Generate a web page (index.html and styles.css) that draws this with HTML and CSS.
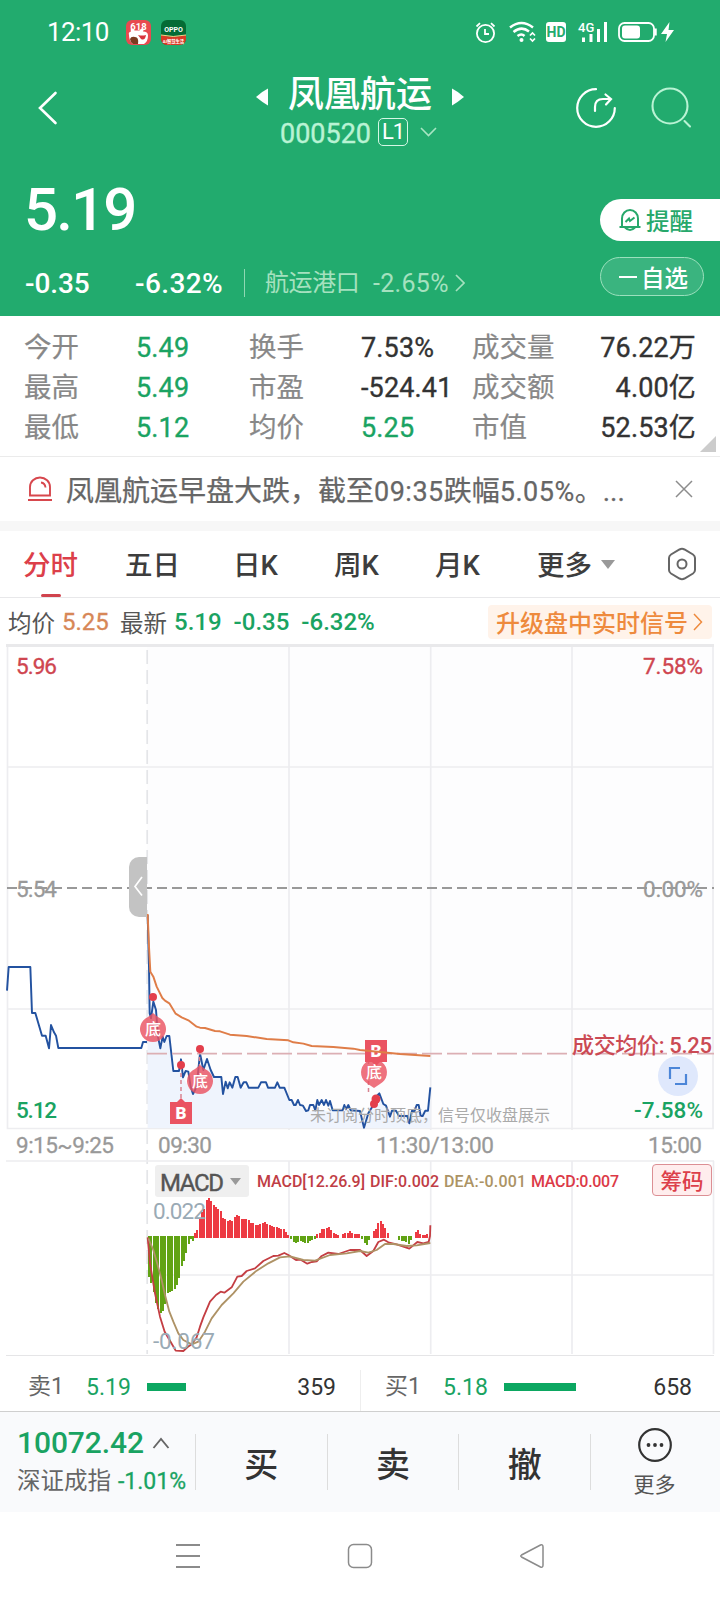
FILE: index.html
```html
<!DOCTYPE html>
<html lang="zh-CN">
<head>
<meta charset="utf-8">
<title>凤凰航运 000520</title>
<link rel="stylesheet" href="styles.css">
</head>
<body>
<header class="hero">
  <div class="status">
    <span class="clock">12:10</span>
    <svg class="app-icon" width="25" height="25" viewBox="0 0 25 25">
      <rect width="25" height="25" rx="6" fill="#e84a50"/>
      <path d="M3 15q-1-3 2-3.500q-1-3 1-3q2 0 2.500 2h5q1-2 3-2q2 0 .5 3q5 0 5 4q0 6-4 8.500H8c-3 0-5-5-5-9z" fill="#fff"/>
      <path d="M4 19q1-3 5-2q4 0 3 7H7q-3-2-3-5z" fill="#7c3b20"/>
      <path d="M12 15q4 1 8 0q-1 6-5 4z" fill="#d8333c"/>
      <text x="12.5" y="9.5" class="app-618">618</text>
    </svg>
    <svg class="app-icon second" width="25" height="25" viewBox="0 0 25 25">
      <rect width="25" height="25" rx="6" fill="#056b35"/>
      <path d="M0 15q12 3 25 0v4a6 6 0 0 1-6 6H6a6 6 0 0 1-6-6z" fill="#d93a25"/>
      <path d="M0 15q12 3 25 0" fill="none" stroke="#f2d888"/>
      <text x="12.5" y="11.5" class="app-oppo">OPPO</text>
      <text x="12.5" y="23" class="app-sub">AI智慧生活</text>
    </svg>
    <svg class="sys" width="200" height="24" viewBox="475 20 200 24" fill="none" stroke="#fff" stroke-width="1.8">
      <circle cx="485.500" cy="33.500" r="8.600"/><path d="M485 29v5h4M476.500 26.500l3.500-3.300M494.500 26.500l-3.500-3.300"/>
      <path d="M510 27.500q11.500-9 23 0M513.500 32q8-6.500 15.500-.5M517.500 36q4-3 7 0" stroke-width="2.500"/>
      <circle cx="521.500" cy="40" r="2" fill="#fff" stroke="none"/>
      <path d="M530 35.500l2.500-2.500 2.500 2.500M530 38.500l2.500 2.500 2.500-2.500" stroke-width="1.700"/>
      <rect x="546" y="22" width="20" height="20" rx="3" fill="#fff" stroke="none"/>
      <text x="556" y="37" class="hd">HD</text>
      <text x="578" y="32" class="g4">4G</text>
      <path d="M583.500 42v-4.500M591 42v-8M598.500 42V29M605.500 42V22" stroke-width="3"/>
      <rect x="619" y="23" width="35" height="18" rx="5.500"/><rect x="622" y="25.500" width="18" height="13" rx="3" fill="#fff" stroke="none"/>
      <path d="M655.500 28.500v7" stroke-width="2.500"/><path d="M669.500 22l-8.500 12h6l-1.500 8 8.500-12h-5.500z" fill="#fff" stroke="none"/>
    </svg>
  </div>

  <div class="titlebar">
    <svg class="back" width="20" height="34" viewBox="0 0 20 34"><path d="M17.500 2L2 17l15.500 15" fill="none" stroke="#fff" stroke-width="2.600" stroke-linecap="round"/></svg>
    <div class="titles">
      <div class="name-row">
        <svg width="12" height="18" viewBox="0 0 12 18"><path d="M12 .5v17q-6-3.500-12-8.500Q6 3.500 12 .5z" fill="#fff"/></svg>
        <h1>凤凰航运</h1>
        <svg width="12" height="18" viewBox="0 0 12 18"><path d="M0 .5v17q6-3.500 12-8.500Q6 3.500 0 .5z" fill="#fff"/></svg>
      </div>
      <div class="code-row">
        <span class="code">000520</span><span class="level">L1</span>
        <svg width="17" height="10" viewBox="0 0 17 10"><path d="M1 1l7.500 7.500L16 1" fill="none" stroke="#a8e5c3" stroke-width="1.600"/></svg>
      </div>
    </div>
    <svg class="tools" width="118" height="44" viewBox="575 86 118 44" fill="none" stroke-linecap="round">
      <path d="M596 89.200a18.800 18.800 0 1 0 18.800 18.800" stroke="#fff" stroke-width="2.200"/>
      <path d="M595 111v-4q0-8 8-8h7M605.500 94.500l5.500 4.500-5 5.500" stroke="#fff" stroke-width="2.200"/>
      <g stroke="#b9f3d4" stroke-width="2.100"><circle cx="670" cy="106" r="17.500"/><path d="M684.500 121l5.500 5.500"/></g>
    </svg>
  </div>

  <div class="quote">
    <div class="quote-left">
      <div class="price">5.19</div>
      <div class="change">
        <span class="chg">-0.35</span><span class="pct">-6.32%</span><i class="bar"></i>
        <span class="sector">航运港口</span><span class="sector-pct">-2.65%</span>
        <svg width="10" height="18" viewBox="0 0 10 18"><path d="M1 1l8 8-8 8" fill="none" stroke="#a5e1bf" stroke-width="1.700"/></svg>
      </div>
    </div>
    <div class="actions">
      <button class="remind">
        <svg width="24" height="24" viewBox="0 0 24 24" fill="none" stroke="#27a86b" stroke-width="2"><path d="M1.500 19h21M4 19v-8.500a8 8.500 0 0 1 16 0V19M7 19.500q5 5 10 0M7.500 14l3.500-3.500 1 2.500 4.500-3.500"/></svg>
        提醒</button>
      <button class="fav"><i></i>自选</button>
    </div>
  </div>
</header>

<section class="stats">
  <div class="grid">
    <span>今开</span><b class="down">5.49</b><span>换手</span><b>7.53%</b><span>成交量</span><b class="end">76.22万</b>
    <span>最高</span><b class="down">5.49</b><span>市盈</span><b>-524.41</b><span>成交额</span><b class="end">4.00亿</b>
    <span>最低</span><b class="down">5.12</b><span>均价</span><b class="down">5.25</b><span>市值</span><b class="end">52.53亿</b>
  </div>
  <i class="corner"></i>
</section>

<section class="notice">
  <svg width="26" height="26" viewBox="0 0 26 26" fill="none" stroke="#d7474d" stroke-width="1.900"><path d="M3 19.500V11a10 9.500 0 0 1 20 0v8.500zM1 24h24M14 6.500q4 .5 4.500 5"/></svg>
  <p>凤凰航运早盘大跌，截至<em>09:35</em>跌幅<em>5.05%</em>。...</p>
  <svg width="18" height="18" viewBox="0 0 18 18"><path d="M1 1l16 16M17 1L1 17" stroke="#8c8c8c" stroke-width="1.500"/></svg>
</section>

<nav class="tabs">
  <a class="on">分时</a><a>五日</a><a>日K</a><a>周K</a><a>月K</a><a class="more">更多<i></i></a>
  <svg width="30" height="34" viewBox="0 0 30 34" fill="none" stroke="#666" stroke-width="2"><path d="M12.500 2.500q2.500-1.300 5 0l8.500 5q2 1.300 2 3.500v12q0 2.200-2 3.500l-8.500 5q-2.500 1.300-5 0L4 26.500q-2-1.300-2-3.500V11q0-2.200 2-3.500z"/><circle cx="15" cy="17" r="4.500"/></svg>
</nav>

<section class="info">
  <span class="t">均价</span><span class="avg">5.25</span><span class="t latest">最新</span><span class="g">5.19</span><span class="g">-0.35</span><span class="g">-6.32%</span>
  <a class="promo">升级盘中实时信号<svg width="10" height="18" viewBox="0 0 10 18"><path d="M1 1l7.500 8L1 17" fill="none" stroke="#ee8a3d" stroke-width="1.500"/></svg></a>
</section>

<svg class="chart" width="720" height="716" viewBox="0 640 720 716">
  <!-- price panel grid -->
  <rect x="147" y="646" width="566" height="482" fill="#fdfdfe"/>
  <path d="M7.500 645V1128.500H713V645M289 645v485M430.700 645v485M572 645v485M7 767h706M7 1009h706" class="gridline"/>
  <path d="M6 645.500h708" stroke="#e9e9eb" stroke-width="3"/>
  <path d="M147.200 650V1354" stroke="#e4e5e8" stroke-width="1.700" stroke-dasharray="14 6"/>
  <path d="M7 888H714" stroke="#999" stroke-width="1.900" stroke-dasharray="10 5"/>
  <g transform="translate(0 840) scale(.33333)" fill="none" stroke-linejoin="round">
    <path fill="#eff4fd" d="M443 864V225L449 520 460 485 481 625 508 588 520 693 537 693 579 762 600 640 642 711 664 711 669 762 706 711 722 743 853 743 868 780 918 813 1080 813 1092 863 1128 770 1138 760 1170 830 1284 812 1291 742V864z"/>
    <path class="blue" d="M21 452L26 381H91L96 519H106L126 587H137L147 625 153 555 162 577 168 587 175 624H424L429 606H441"/>
    <path class="blue" d="M443 225L447 380 449 520 453 535 460 485 468 510 474 590 481 625 488 590 493 606 500 588H508L520 693H537L543 658 549 712 557 693 565 695 572 740 579 762 590 740 600 640 610 690 621 657 632 690 642 711H664L669 762 677 725 683 745 689 727 697 743 706 711H713L722 743 731 727H739L746 743H775L783 727H798L804 743H825L832 727 839 743H853L868 780H875L882 795H887L894 780 900 795 909 797 918 813 925 811 930 795H940L946 811 952 780 957 795 965 780 972 795 978 780 985 797 990 783 998 811H1028L1033 795 1038 808 1045 795 1052 811 1080 813 1092 863 1105 820 1120 795 1128 770 1138 760 1150 792 1158 797 1170 830 1176 812H1188L1197 828H1222L1228 850 1236 812 1243 815 1250 795H1256L1262 828H1268L1276 812H1284L1291 742"/>
    <path d="M441 641H2142" stroke="#dcafb4" stroke-width="5" stroke-dasharray="60 15"/>
  </g>
  <!-- signal markers -->
  <g fill="#ea5362">
    <path d="M181 1066v33M199.500 1050v18M368.500 1060v34" stroke="#d88390" stroke-width="1.500" stroke-dasharray="4 3"/>
    <g fill-opacity=".82">
      <path d="M153 1013l5 4a13 13 0 1 1-10 0z"/><path d="M200 1065l5 4a13 13 0 1 1-10 0z"/><path d="M374 1088l-6-4a13 13 0 1 1 12 0z"/>
    </g>
    <path d="M170 1102h7l4-4 4 4h7v22h-22z"/><path d="M365 1040h22v22h-7l-4 4-4-4h-7z"/>
    <g fill="#e33e4b"><circle cx="153" cy="997" r="4"/><circle cx="181" cy="1065" r="4"/><circle cx="200" cy="1049" r="4"/><circle cx="374" cy="1104" r="4"/><circle cx="376" cy="1099" r="4.500"/></g>
  </g>
  <text x="153" y="1035" class="pin">底</text><text x="200" y="1087" class="pin">底</text><text x="374" y="1078" class="pin">底</text>
  <text x="181" y="1119" class="pin bb">B</text><text x="376" y="1057" class="pin bb">B</text>
  <path transform="translate(0 840) scale(.33333)" class="orange" d="M443 222L447 320 451 395 460 410 470 440 487 474 495 482 508 490 527 521 545 532 567 542 590 560 600 563 615 564 645 573 660 574 690 584 740 588 800 597 865 601 880 607 910 611 935 618 1000 621 1060 626 1080 630 1140 636 1200 642 1291 648"/>
  <path d="M147 857v60h-8a10 10 0 0 1-10-10v-40a10 10 0 0 1 10-10z" fill="#c3c3c3"/><path d="M142 877l-7 9.500 7 9" fill="none" stroke="#fff" stroke-width="1.700"/>
  <g class="lab">
    <text x="16" y="674" textLength="41" class="up">5.96</text><text x="643" y="674" textLength="60" class="up">7.58%</text>
    <text x="16" y="897" textLength="41" class="mute">5.54</text><text x="643" y="897" textLength="60" class="mute">0.00%</text>
    <text x="16" y="1118" textLength="41" class="grn">5.12</text><text x="634" y="1118" textLength="69" class="grn">-7.58%</text>
    <text x="16" y="1153" textLength="98" class="mute">9:15~9:25</text><text x="158" y="1153" textLength="54" class="mute">09:30</text>
    <text x="376" y="1153" textLength="118" class="mute">11:30/13:00</text><text x="648" y="1153" textLength="54" class="mute">15:00</text>
    <text x="572" y="1053" textLength="140" fill="#cb4a54" class="deal">成交均价: 5.25</text>
    <text x="310" y="1121" textLength="240" class="tip">未订阅分时顶底，信号仅收盘展示</text>
  </g>
  <circle cx="678" cy="1076" r="20" fill="#dfe8fc"/>
  <path d="M670 1079v-11h10M675 1084h11v-10" fill="none" stroke="#4c86d8" stroke-width="2.200"/>
  <!-- MACD panel -->
  <path d="M6 1161h708M289 1161v193M430.700 1161v193M572 1161v193M713.500 1161v193M147 1275h567" class="gridline thin"/>
  <path d="M6 1355.500h708" stroke="#e5e5e7"/>
  <g transform="translate(130 1150) scale(.33333)" fill="none">
    <g stroke-width="5.800" shape-rendering="crispEdges">
    <path stroke="#61a314" d="M57 259V380M64 259V400M71 259V425M78 259V458M85 259V478M92 259V490M99 259V482M106 259V462M113 259V430M120 259V427M127 259V422M134 259V418M141 259V405M148 259V383M155 259V347M162 259V332M169 259V308M176 259V283M183 259V268M190 259V274M484 259V268M491 259V276M498 259V280M505 259V276M512 259V274M519 259V276M526 259V280M533 259V280M540 259V274M547 259V270M554 259V266M697 259V266M704 259V280M711 259V284M718 259V270M808 259V270M815 259V272M822 259V274M829 259V276M836 259V282M843 259V270"/>
    <path stroke="#ed3a43" d="M195 263V248M202 263V240M209 263V205M216 263V185M223 263V178M230 263V150M237 263V145M244 263V153M251 263V165M258 263V170M265 263V178M272 263V183M279 263V204M286 263V208M293 263V213M300 263V210M307 263V214M314 263V201M321 263V195M328 263V198M335 263V207M342 263V206M349 263V208M356 263V210M363 263V219M370 263V220M377 263V224M384 263V226M391 263V222M398 263V219M405 263V215M412 263V222M419 263V224M426 263V227M433 263V230M440 263V230M447 263V233M454 263V236M461 263V238M468 263V245M475 263V256M562 263V252M569 263V249M576 263V237M583 263V236M590 263V234M597 263V232M604 263V240M611 263V248M618 263V251M625 263V256M639 263V251M646 263V250M653 263V248M660 263V243M667 263V250M674 263V252M681 263V252M688 263V253M731 263V243M738 263V236M745 263V218M752 263V213M759 263V222M766 263V233M773 263V248M857 263V246M864 263V240M871 263V252M878 263V256M885 263V254M892 263V252"/>
    </g>
    <path stroke="#c43e43" stroke-width="5.500" stroke-linejoin="round" d="M53 262L60 340 75 430 90 500 104 545 120 572 137 602 160 603 172 592 185 583 200 562 210 530 220 502 240 455 258 435 272 425 283 428 305 412 322 380 335 378 350 363 375 355 400 333 430 318 445 317 463 309 475 315 498 330 512 329 532 341 545 336 560 334 575 318 595 308 625 312 660 300 690 300 710 318 730 303 745 276 762 269 775 277 800 283 838 296 862 276 880 280 896 276 900 258 901 226"/>
    <path stroke="#ae9265" stroke-width="5.500" stroke-linejoin="round" d="M55 265L70 300 83 345 95 390 105 435 118 485 130 515 145 550 160 570 185 583 205 575 225 545 245 505 275 465 310 430 340 395 380 362 415 340 450 322 480 319 520 330 555 332 600 315 650 310 690 303 715 308 740 300 765 282 790 282 830 288 860 286 901 279"/>
  </g>
  <rect x="155" y="1165" width="94" height="32" rx="3" fill="#efefef"/><path d="M230 1178h11l-5.500 7z" fill="#999"/>
  <text x="160" y="1191" textLength="64" class="macd">MACD</text>
  <g class="small">
    <text x="257" y="1187" textLength="108" fill="#bf3d45">MACD[12.26.9]</text><text x="370" y="1187" textLength="69" fill="#bf3d45">DIF:0.002</text>
    <text x="444" y="1187" textLength="82" fill="#ac9364">DEA:-0.001</text><text x="531" y="1187" textLength="88" fill="#dc3a47">MACD:0.007</text>
  </g>
  <g class="lab" fill="#9aaab5"><text x="153" y="1219" textLength="53">0.022</text><text x="153" y="1349" textLength="62">-0.067</text></g>
  <rect x="652.500" y="1164.500" width="59" height="31" rx="3.500" fill="#ffeded" stroke="#dc8f94"/><text x="682" y="1189" class="chips">筹码</text>
</svg>

<section class="orders">
  <div class="order"><span>卖1</span><b>5.19</b><i style="width:39px"></i><em>359</em></div>
  <div class="order buy"><span>买1</span><b>5.18</b><i style="width:72px"></i><em>658</em></div>
</section>

<footer class="trade">
  <div class="index">
    <div class="idx">10072.42<svg width="18" height="12" viewBox="0 0 18 12"><path d="M1.500 11L9 2l7.500 9" fill="none" stroke="#666" stroke-width="1.900"/></svg></div>
    <div class="idx-sub">深证成指<b>-1.01%</b></div>
  </div>
  <a>买</a><a>卖</a><a>撤</a>
  <div class="dots">
    <svg width="36" height="36" viewBox="0 0 36 36"><circle cx="18" cy="18" r="15.800" fill="none" stroke="#333" stroke-width="2.200"/><g fill="#333"><circle cx="11.500" cy="18" r="1.900"/><circle cx="18" cy="18" r="1.900"/><circle cx="24.500" cy="18" r="1.900"/></g></svg>
    更多</div>
</footer>

<div class="sysnav">
  <svg width="26" height="26" viewBox="0 0 26 26" fill="none" stroke="#8b8b8b" stroke-width="1.800"><path d="M1 2h24M1 13h24M1 24h24"/></svg>
  <svg width="26" height="26" viewBox="0 0 26 26" fill="none" stroke="#8b8b8b" stroke-width="1.500"><rect x="1.500" y="1.500" width="23" height="23" rx="5"/></svg>
  <svg width="26" height="26" viewBox="0 0 26 26" fill="none" stroke="#8b8b8b" stroke-width="1.500"><path d="M21.500 2q2.500-1 2.500 2v18q0 3-2.500 2L2.500 14q-1.500-1 0-2z"/></svg>
</div>
</body>
</html>
```

FILE: styles.css
```css
* { box-sizing: border-box; }
body { margin: 0; width: 720px; height: 1600px; overflow: hidden; background: #fff; font-family: Roboto, "Noto Sans CJK SC", sans-serif; color: #333; }
svg { display: block; flex: none; }
b, em, i { font-style: normal; font-weight: inherit; }
button { font: inherit; border: 0; padding: 0; }

.hero { height: 316px; background: #22ab6e; color: #fff; }
.status { height: 64px; padding-left: 47px; display: flex; align-items: center; }
.clock { font-size: 26px; width: 79px; letter-spacing: -.6px; }
.app-icon.second { margin-left: 10px; }
.app-618, .app-oppo, .app-sub { fill: #fff; text-anchor: middle; font-weight: 700; }
.app-618 { font-size: 9.5px; }
.app-oppo { font-size: 7px; }
.app-sub { font-size: 4.3px; }
.sys { margin-left: 289px; }
.hd { font-size: 14px; font-weight: 700; text-anchor: middle; fill: #22ab6e; stroke: none; }
.g4 { font-size: 13px; font-weight: 500; fill: #fff; stroke: none; }

.titlebar { height: 100px; display: flex; align-items: flex-start; }
.back { margin: 27px 0 0 38px; }
.titles { width: 208px; margin-left: 198px; }
.name-row { height: 58px; padding-top: 3px; display: flex; align-items: center; justify-content: space-between; }
h1 { margin: 0; font-size: 36px; font-weight: 500; line-height: 52px; }
.name-row svg { margin-top: 5px; }
.code-row { height: 30px; margin-top: -5px; padding-left: 24px; display: flex; align-items: center; color: #b9f3d4; }
.code { font-size: 27px; width: 98px; line-height: 30px; font-weight: 400; padding-top: 3px; -webkit-text-stroke: .4px currentColor; }
.level { width: 30px; height: 28px; border: 1.5px solid #d6f7e5; border-radius: 5px; color: #fff; font-size: 22px; line-height: 26px; text-align: center; letter-spacing: -1px; margin-right: 12px; }
.tools { margin: 22px 0 0 111px; }

.quote { height: 152px; display: flex; justify-content: space-between; }
.quote-left { padding-left: 24px; }
.price { font-size: 60px; font-weight: 500; line-height: 70px; margin-top: 11px; letter-spacing: -1.9px; }
.change { margin-top: 21px; height: 34px; display: flex; align-items: center; font-size: 28px; font-weight: 500; white-space: nowrap; }
.chg { width: 111px; letter-spacing: -.1px; padding-left: 1px; }
.pct { width: 109px; letter-spacing: .4px; }
.bar { width: 1px; height: 28px; background: #8fd8b3; margin-right: 20px; }
.sector { font-size: 24px; color: #a5e1bf; font-weight: 400; width: 108px; letter-spacing: -.4px; line-height: 32px; margin-top: -1px; }
.sector-pct { font-size: 25px; color: #a5e1bf; font-weight: 400; width: 82px; letter-spacing: .3px; }
.actions { width: 120px; padding-top: 35px; }
.remind { width: 120px; height: 42px; display: flex; align-items: center; gap: 4px; padding-left: 18px; background: #fff; color: #27a86b; border-radius: 21px 0 0 21px; font-size: 23.5px; font-weight: 500; margin-bottom: 16px; }
.fav { width: 104px; height: 39px; display: flex; align-items: center; padding-left: 18px; gap: 4px; background: #3ab47f; border: 1px solid #9be0bd; border-radius: 20px; color: #fff; font-size: 23.5px; font-weight: 500; }
.fav i { width: 18px; height: 2px; background: #fff; }

.stats { height: 141px; padding: 12px 24px 0; border-bottom: 1px solid #ebebeb; position: relative; }
.grid { display: grid; grid-template-columns: 112px 113px 112px 111px 90px 134px; grid-auto-rows: 40px; line-height: 40px; font-size: 27px; color: #333; white-space: nowrap; }
.grid span { color: #888; font-size: 27.5px; -webkit-text-stroke: .2px currentColor; }
.grid b { letter-spacing: .15px; -webkit-text-stroke: .35px currentColor; }
.grid .down { color: #1aa362; }
.grid .end { text-align: right; }
.corner { position: absolute; right: 4px; bottom: 4px; border-left: 16px solid transparent; border-bottom: 16px solid #ccc; }

.notice { height: 64px; padding: 0 27px; display: flex; align-items: center; color: #666; }
.notice p { margin: 5px 0 0 13px; width: 609px; font-size: 28px; line-height: 40px; white-space: nowrap; -webkit-text-stroke: .25px currentColor; }
.notice em { font-size: 27px; letter-spacing: .5px; }

.tabs { height: 77px; border-top: 10px solid #f7f7f7; border-bottom: 1px solid #e8e8ea; display: flex; align-items: center; font-size: 27.5px; font-weight: 500; color: #3d3d3d; padding-left: 23px; }
.tabs a { position: relative; height: 66px; line-height: 70px; width: 101px; white-space: nowrap; }
.tabs a:nth-child(1) { width: 102px; }
.tabs a:nth-child(2) { width: 108px; }
.tabs .on { color: #dc3f4a; }
.tabs .on::after { content: ""; position: absolute; left: 18px; bottom: 0; width: 20px; height: 3px; border-radius: 2px; background: #d0434d; }
.tabs .more { width: 130px; margin-left: 1px; padding-top: 3px; display: flex; align-items: center; gap: 9px; }
.more i { border: 7px solid transparent; border-top: 9px solid #999; border-bottom: 0; margin-top: -2px; }

.info { height: 42px; margin-top: 3px; padding: 0 8px 0 8px; display: flex; align-items: center; font-size: 24px; white-space: nowrap; }
.t { font-size: 23.5px; color: #555; width: 54px; }
.avg { color: #d78757; width: 58px; -webkit-text-stroke: .3px currentColor; }
.g { color: #1aa362; margin-right: 12px; font-weight: 500; }
.promo { margin-left: auto; height: 34px; width: 224px; padding-left: 8px; display: flex; align-items: center; gap: 5px; border-radius: 4px; background: #fff3ea; color: #ee8a3d; font-weight: 500; margin-top: -1px; }

.chart { margin-top: -3px; }
.gridline { fill: none; stroke: #ededf0; stroke-width: 1.7; }
.blue { fill: none; stroke: #2352a0; stroke-width: 5.8; }
.orange { fill: none; stroke: #df7d48; stroke-width: 5.8; stroke-linejoin: round; }
.pin { font-size: 16px; fill: #fff; text-anchor: middle; font-weight: 500; }
.bb { font-weight: 900; font-size: 17px; }
.lab { font-size: 22.5px; }
.up { fill: #cf4650; stroke: #cf4650; stroke-width: .35px; }
.mute { fill: #999; stroke: #999; stroke-width: .3px; }
.grn { fill: #1aa362; font-weight: 500; }
.deal { font-size: 22px; font-weight: 500; }
.tip { font-size: 16px; fill: #aaa; }
.macd { font-size: 24px; fill: #555; stroke: #555; stroke-width: .4px; }
.small { font-size: 16px; font-weight: 500; }
.chips { font-size: 21.5px; font-weight: 500; fill: #dc3f4a; text-anchor: middle; }

.orders { height: 56px; display: flex; border-bottom: 1px solid #cfcfcf; }
.order { width: 360px; padding: 7px 24px 0 28px; display: flex; align-items: center; font-size: 23px; color: #333; }
.order span { width: 58px; color: #666; font-size: 23px; line-height: 32px; margin-top: -1px; }
.order b { width: 61px; color: #1aa362; }
.order i { height: 8px; background: #0ca761; }
.order em { margin-left: auto; }
.buy { padding-left: 25px; padding-right: 28px; background: linear-gradient(#eee, #eee) 0 14px / 1px 42px no-repeat; }

.trade { height: 100px; background: #f9fafc; display: flex; align-items: center; }
.index { width: 195px; padding-left: 17px; }
.idx { height: 38px; display: flex; align-items: center; gap: 8px; font-size: 30px; font-weight: 500; color: #1aa362; letter-spacing: -.1px; }
.idx-sub { font-size: 23.5px; color: #666; line-height: 38px; white-space: nowrap; }
.idx-sub b { color: #1aa362; margin-left: 7px; font-size: 23px; -webkit-text-stroke: .3px currentColor; }
.trade a { width: 132px; height: 56px; border-left: 1px solid #ddd; text-align: center; font-size: 34px; line-height: 62px; font-weight: 500; }
.dots { width: 130px; height: 56px; border-left: 1px solid #ddd; padding: 6px 2px 0 0; display: flex; flex-direction: column; align-items: center; justify-content: center; gap: 4px; font-size: 21px; line-height: 36px; color: #555; }
.sysnav { height: 88px; display: flex; justify-content: center; align-items: center; gap: 146px; }
```
